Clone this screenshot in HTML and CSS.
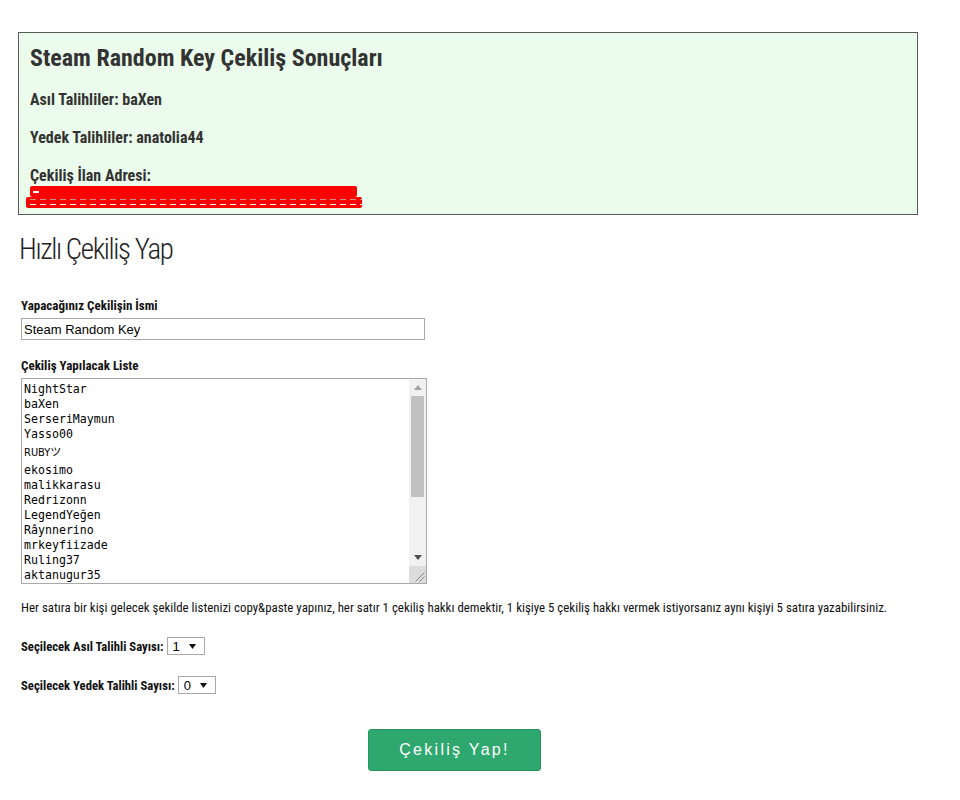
FILE: index.html
```html
<!DOCTYPE html>
<html lang="tr">
<head>
<meta charset="utf-8">
<title>Hızlı Çekiliş Yap</title>
<link rel="stylesheet" href="styles.css">
</head>
<body>
<div class="page">
  <div class="result">
    <h2 class="result-title">Steam Random Key Çekiliş Sonuçları</h2>
    <p class="result-line">Asıl Talihliler: baXen</p>
    <p class="result-line">Yedek Talihliler: anatolia44</p>
    <p class="result-line">Çekiliş İlan Adresi:</p>
    <div class="redact">
      <span class="redact-top"><span class="redact-dash"></span></span>
      <span class="redact-bottom"></span>
    </div>
  </div>

  <h1 class="page-title">Hızlı Çekiliş Yap</h1>

  <form class="form">
    <label class="field-label" for="name">Yapacağınız Çekilişin İsmi</label>
    <input class="text-input" id="name" type="text" value="Steam Random Key">

    <label class="field-label list-label" for="list">Çekiliş Yapılacak Liste</label>
    <div class="list-box">
      <div class="list-area" id="list" role="textbox" aria-multiline="true" contenteditable="true">
        <div class="list-line">NightStar</div>
        <div class="list-line">baXen</div>
        <div class="list-line">SerseriMaymun</div>
        <div class="list-line">Yasso00</div>
        <div class="list-line list-line-tall"><span class="small">RUBY</span>ツ</div>
        <div class="list-line">ekosimo</div>
        <div class="list-line">malikkarasu</div>
        <div class="list-line">Redrizonn</div>
        <div class="list-line">LegendYeğen</div>
        <div class="list-line">Râynnerino</div>
        <div class="list-line">mrkeyfiizade</div>
        <div class="list-line">Ruling37</div>
        <div class="list-line">aktanugur35</div>
      </div>
      <div class="scrollbar" aria-hidden="true">
        <div class="sb-button">
          <svg width="8" height="5" viewBox="0 0 8 5"><polygon points="0,5 4,0 8,5" fill="#a3a3a3"/></svg>
        </div>
        <div class="sb-track"><div class="sb-thumb"></div></div>
        <div class="sb-button">
          <svg width="8" height="5" viewBox="0 0 8 5"><polygon points="0,0 8,0 4,5" fill="#505050"/></svg>
        </div>
        <div class="sb-corner">
          <svg width="17" height="17" viewBox="0 0 17 17"><path d="M6.5 15.5 L15.5 6.5 M10.5 15.5 L15.5 10.5" stroke="#8a8a8a" stroke-width="1"/></svg>
        </div>
      </div>
    </div>

    <p class="hint">Her satıra bir kişi gelecek şekilde listenizi copy&amp;paste yapınız, her satır 1 çekiliş hakkı demektir, 1 kişiye 5 çekiliş hakkı vermek istiyorsanız aynı kişiyi 5 satıra yazabilirsiniz.</p>

    <div class="select-row">
      <label class="select-label" for="asil">Seçilecek Asıl Talihli Sayısı:</label>
      <select class="select" id="asil"><option>1</option><option>2</option><option>3</option></select>
    </div>
    <div class="select-row">
      <label class="select-label" for="yedek">Seçilecek Yedek Talihli Sayısı:</label>
      <select class="select" id="yedek"><option>0</option><option>1</option><option>2</option></select>
    </div>

    <div class="actions">
      <button class="submit" type="button">Çekiliş Yap!</button>
    </div>
  </form>
</div>
</body>
</html>
```

FILE: styles.css
```css
html, body {
  margin: 0;
  padding: 0;
  background: #ffffff;
}

body {
  font-family: "Roboto Condensed", "DejaVu Sans Condensed", Roboto, "Liberation Sans", sans-serif;
  font-stretch: condensed;
  color: #333333;
}

.page {
  padding: 32px 42px 0 18px;
}

/* ---------- result box ---------- */

.result {
  border: 1px solid #5a5a5a;
  background: #ebfcec;
  padding: 0 11px;
  height: 183px;
  box-sizing: border-box;
}

.result-title {
  margin: 11px 0 0 0;
  font-size: 24px;
  line-height: 28px;
  font-weight: 700;
  color: #333333;
}

.result-line {
  margin: 18px 0 0 0;
  font-size: 16px;
  line-height: 20px;
  font-weight: 700;
  color: #333333;
}

.redact {
  display: flex;
  flex-direction: column;
  width: 336px;
  margin-left: -4px;
}

.redact-top {
  display: flex;
  align-items: center;
  height: 11px;
  margin: 0 5px 0 4px;
  padding-left: 3px;
  background: #ff0000;
  border-radius: 2px;
}

.redact-dash {
  display: block;
  width: 6px;
  height: 2px;
  background: #ffffff;
}

.redact-bottom {
  display: block;
  height: 11px;
  border-radius: 2px;
  background-image:
    repeating-linear-gradient(90deg, #ff0000 0 4px, transparent 4px 10px),
    linear-gradient(#ff0000 0 2px, #c89090 2px 3px, #ff0000 3px 7px, #ffffff 7px 8px, #ff0000 8px);
}

/* ---------- heading ---------- */

.page-title {
  margin: 16px 0 0 1px;
  font-size: 29px;
  line-height: 36px;
  font-weight: 300;
  color: #222222;
  letter-spacing: -1.4px;
}

/* ---------- form ---------- */

.form {
  display: flex;
  flex-direction: column;
  align-items: flex-start;
  padding-left: 3px;
}

.field-label {
  margin-top: 31px;
  font-size: 13px;
  line-height: 16px;
  font-weight: 700;
  color: #111111;
}

.list-label {
  margin-top: 18px;
}

.text-input {
  margin-top: 4px;
  width: 404px;
  height: 22px;
  box-sizing: border-box;
  border: 1px solid #a9a9a9;
  padding: 0 2px;
  font-family: "Liberation Sans", Arial, sans-serif;
  font-size: 13px;
  color: #000000;
  background: #ffffff;
  outline: none;
}

.list-box {
  margin-top: 4px;
  display: flex;
  width: 406px;
  height: 206px;
  box-sizing: border-box;
  border: 1px solid #a9a9a9;
  background: #ffffff;
}

.list-area {
  flex: 1;
  overflow: hidden;
  padding: 3px 2px 0 2px;
  font-family: "DejaVu Sans Mono", "Noto Sans CJK JP", monospace;
  font-size: 11.6px;
  color: #000000;
  outline: none;
}

.list-line {
  height: 15px;
  line-height: 15px;
  white-space: pre;
}

.list-line-tall {
  height: 21px;
  line-height: 17px;
  padding-top: 1px;
  box-sizing: border-box;
  font-family: "Noto Sans CJK JP", sans-serif;
  font-size: 11px;
}

.list-line-tall .small {
  font-family: "DejaVu Sans", sans-serif;
  font-size: 11px;
}

.scrollbar {
  width: 17px;
  display: flex;
  flex-direction: column;
  background: #f1f1f1;
}

.sb-button {
  height: 17px;
  display: flex;
  align-items: center;
  justify-content: center;
}

.sb-track {
  flex: 1;
  padding: 0 2px;
}

.sb-thumb {
  height: 101px;
  background: #c1c1c1;
}

.sb-corner {
  height: 17px;
  background: #dcdcdc;
}

.sb-corner svg {
  display: block;
}

.hint {
  margin: 16px 0 0 0;
  font-size: 12.9px;
  line-height: 16px;
  color: #111111;
  white-space: nowrap;
}

.select-row {
  display: flex;
  align-items: center;
  gap: 3px;
  margin-top: 21px;
  height: 18px;
}

.select-label {
  font-size: 12.7px;
  font-weight: 700;
  color: #111111;
}

.select {
  height: 18px;
  width: 38px;
  border: 1px solid #a9a9a9;
  border-radius: 0;
  background: #ffffff url("data:image/svg+xml;utf8,<svg xmlns='http://www.w3.org/2000/svg' width='7' height='5'><polygon points='0,0 7,0 3.5,5' fill='%23111'/></svg>") no-repeat right 8px center;
  -webkit-appearance: none;
  appearance: none;
  padding: 0 0 0 5px;
  font-family: "Liberation Sans", Arial, sans-serif;
  font-size: 13px;
  color: #000000;
  outline: none;
}

.actions {
  align-self: stretch;
  margin-top: 35px;
  padding-left: 347px;
}

.submit {
  width: 173px;
  height: 42px;
  border: 1px solid #27965f;
  border-radius: 3px;
  background: #2ea86e;
  color: #ffffff;
  font-family: "Liberation Sans", Arial, sans-serif;
  font-size: 16px;
  letter-spacing: 2.3px;
  cursor: pointer;
}
```
